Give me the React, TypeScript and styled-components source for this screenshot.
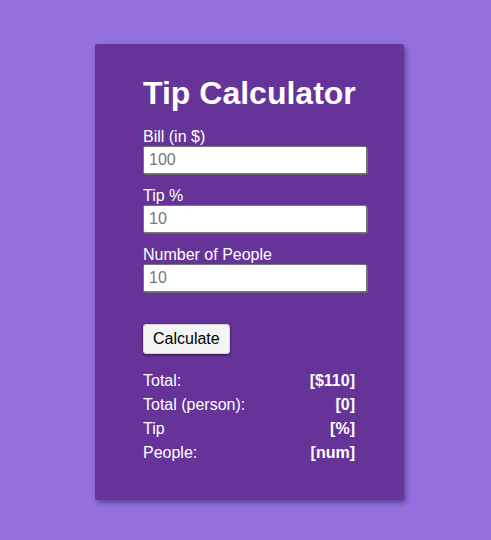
import styled, { createGlobalStyle } from 'styled-components';

const GlobalStyle = createGlobalStyle`
  html, body {
    margin: 0;
    padding: 0;
    background-color: #9370db;
    font-family: "Liberation Sans", Arial, Helvetica, sans-serif;
  }
`;

const Page = styled.div`
  display: flex;
  justify-content: center;
  align-items: flex-start;
  min-height: 540px;
  box-sizing: border-box;
  padding: 44px 0 0 8px;
`;

const Card = styled.div`
  width: 309px;
  box-sizing: border-box;
  padding: 31px 37px 35px 48px;
  background-color: #663399;
  border-radius: 2px;
  box-shadow: 2px 3px 5px rgba(40, 10, 80, 0.45);
  color: #ffffff;
`;

const Title = styled.h1`
  margin: 0 0 16px;
  font-size: 32px;
  font-weight: 700;
  line-height: normal;
`;

const Field = styled.div`
  display: flex;
  flex-direction: column;
  margin-bottom: 13px;
`;

const Label = styled.label`
  font-size: 16px;
  line-height: normal;
`;

const Input = styled.input`
  width: 224px;
  height: 28px;
  box-sizing: border-box;
  margin: 0;
  padding: 0 5px;
  font-family: inherit;
  font-size: 16px;
  color: #222;
  background: #ffffff;
  border: 1px solid #777777;
  border-radius: 2px;
  box-shadow: 1px 1px 0 #6a6a6a;

  &::placeholder {
    color: #767676;
  }
`;

const Button = styled.button`
  margin-top: 19px;
  height: 30px;
  padding: 0 9px;
  font-family: inherit;
  font-size: 16px;
  color: #000;
  background: #f4f4f4;
  border: 1px solid #d6d6d6;
  border-radius: 3px;
  box-shadow: 0 1px 3px rgba(0, 0, 0, 0.55);
`;

const Results = styled.div`
  width: 212px;
  margin-top: 15px;
`;

const Row = styled.div`
  display: flex;
  justify-content: space-between;
  font-size: 16px;
  line-height: 24px;
`;

const Value = styled.strong`
  font-weight: 700;
`;

const fields = [
  { label: 'Bill (in $)', placeholder: '100' },
  { label: 'Tip %', placeholder: '10' },
  { label: 'Number of People', placeholder: '10' },
];

const results = [
  { label: 'Total:', value: '[$110]' },
  { label: 'Total (person):', value: '[0]' },
  { label: 'Tip', value: '[%]' },
  { label: 'People:', value: '[num]' },
];

export default function App() {
  return (
    <>
      <GlobalStyle />
      <Page>
        <Card>
          <Title>Tip Calculator</Title>
          {fields.map((f) => (
            <Field key={f.label}>
              <Label>{f.label}</Label>
              <Input type="text" placeholder={f.placeholder} />
            </Field>
          ))}
          <Button>Calculate</Button>
          <Results>
            {results.map((r) => (
              <Row key={r.label}>
                <span>{r.label}</span>
                <Value>{r.value}</Value>
              </Row>
            ))}
          </Results>
        </Card>
      </Page>
    </>
  );
}
